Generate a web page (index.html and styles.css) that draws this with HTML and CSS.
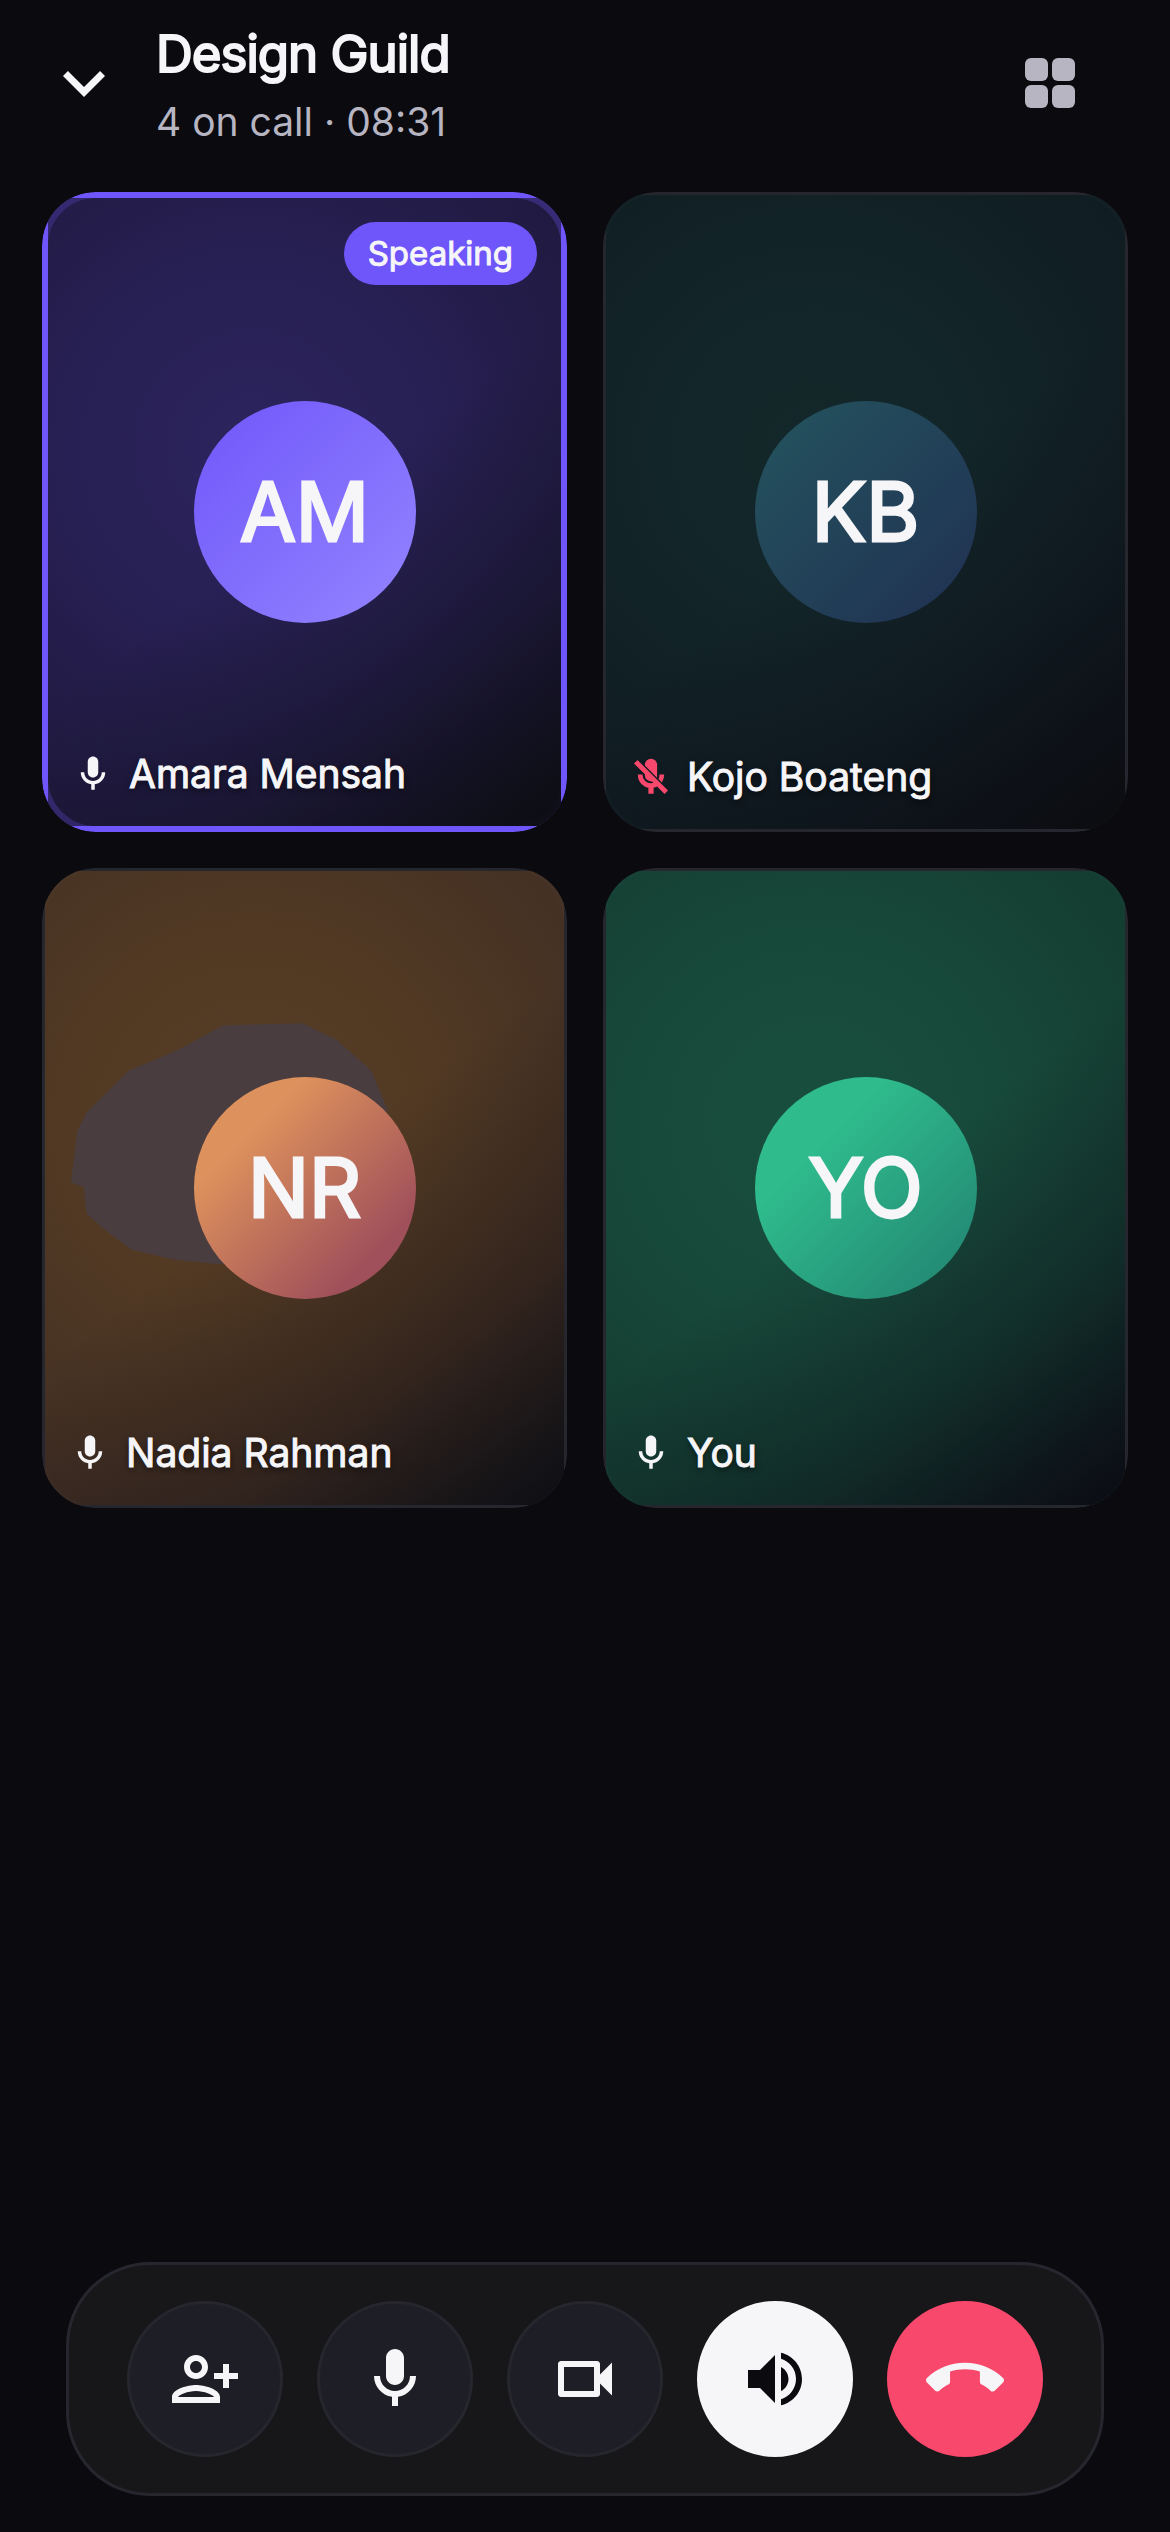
FILE: index.html
```html
<!DOCTYPE html>
<html lang="en">
<head>
    <meta charset="UTF-8">
    <meta name="viewport" content="width=device-width, initial-scale=1.0">
    <title>Design Guild</title>
    <link rel="stylesheet" href="styles.css">
</head>
<body>
    <header class="header">
        <button type="button" class="header-btn back" aria-label="Minimize call">
            <svg viewBox="0 0 24 24"><path d="M7.41 8.59 12 13.17l4.59-4.58L18 10l-6 6-6-6z"/></svg>
        </button>
        <div class="header-text">
            <h1>Design Guild</h1>
            <p>4 on call · 08:31</p>
        </div>
        <button type="button" class="header-btn layout" aria-label="Change layout">
            <svg viewBox="0 0 72 72">
                <rect x="11" y="11" width="23" height="23" rx="6"/>
                <rect x="38" y="11" width="23" height="23" rx="6"/>
                <rect x="11" y="38" width="23" height="23" rx="6"/>
                <rect x="38" y="38" width="23" height="23" rx="6"/>
            </svg>
        </button>
    </header>

    <main class="grid">
        <section class="tile tile-purple speaking">
            <div class="shade"></div>
            <div class="avatar">AM</div>
            <span class="badge">Speaking</span>
            <div class="name">
                <svg viewBox="0 0 24 24"><path d="M12 14c1.66 0 3-1.34 3-3V5c0-1.66-1.34-3-3-3S9 3.34 9 5v6c0 1.66 1.34 3 3 3zm5-3c0 2.76-2.24 5-5 5s-5-2.24-5-5H5c0 3.53 2.61 6.43 6 6.92V21h2v-3.08c3.39-.49 6-3.39 6-6.92h-2z"/></svg>
                <span>Amara Mensah</span>
            </div>
        </section>

        <section class="tile tile-teal">
            <div class="shade"></div>
            <div class="avatar">KB</div>
            <div class="name muted">
                <svg viewBox="0 0 24 24"><path d="M19 11h-1.7c0 .74-.16 1.43-.43 2.05l1.23 1.23c.56-.98.9-2.09.9-3.28zm-4.02.17c0-.06.02-.11.02-.17V5c0-1.66-1.34-3-3-3S9 3.34 9 5v.18l5.98 5.99zM4.27 3 3 4.27l6.01 6.01V11c0 1.66 1.33 3 2.99 3 .22 0 .44-.03.65-.08l1.66 1.66c-.71.33-1.5.52-2.31.52-2.76 0-5.3-2.1-5.3-5.1H5c0 3.41 2.72 6.23 6 6.72V21h2v-3.28c.91-.13 1.77-.45 2.54-.9L19.73 21 21 19.73 4.27 3z"/></svg>
                <span>Kojo Boateng</span>
            </div>
        </section>

        <section class="tile tile-amber">
            <div class="shade"></div>
            <div class="avatar">NR</div>
            <div class="name">
                <svg viewBox="0 0 24 24"><path d="M12 14c1.66 0 3-1.34 3-3V5c0-1.66-1.34-3-3-3S9 3.34 9 5v6c0 1.66 1.34 3 3 3zm5-3c0 2.76-2.24 5-5 5s-5-2.24-5-5H5c0 3.53 2.61 6.43 6 6.92V21h2v-3.08c3.39-.49 6-3.39 6-6.92h-2z"/></svg>
                <span>Nadia Rahman</span>
            </div>
        </section>

        <section class="tile tile-green">
            <div class="shade"></div>
            <div class="avatar">YO</div>
            <div class="name">
                <svg viewBox="0 0 24 24"><path d="M12 14c1.66 0 3-1.34 3-3V5c0-1.66-1.34-3-3-3S9 3.34 9 5v6c0 1.66 1.34 3 3 3zm5-3c0 2.76-2.24 5-5 5s-5-2.24-5-5H5c0 3.53 2.61 6.43 6 6.92V21h2v-3.08c3.39-.49 6-3.39 6-6.92h-2z"/></svg>
                <span>You</span>
            </div>
        </section>
    </main>

    <nav class="dock">
        <button type="button" class="dock-btn" aria-label="Add person">
            <svg viewBox="0 0 24 24"><path d="M13 8c0-2.21-1.79-4-4-4S5 5.79 5 8s1.79 4 4 4 4-1.79 4-4zm-2 0c0 1.1-.9 2-2 2s-2-.9-2-2 .9-2 2-2 2 .9 2 2zM1 18v2h16v-2c0-2.66-5.33-4-8-4s-8 1.34-8 4zm2 0c.2-.71 3.3-2 6-2 2.69 0 5.78 1.28 6 2H3zm17-3v-3h3v-2h-3V7h-2v3h-3v2h3v3h2z"/></svg>
        </button>
        <button type="button" class="dock-btn" aria-label="Mute">
            <svg viewBox="0 0 24 24"><path d="M12 14c1.66 0 3-1.34 3-3V5c0-1.66-1.34-3-3-3S9 3.34 9 5v6c0 1.66 1.34 3 3 3zm5-3c0 2.76-2.24 5-5 5s-5-2.24-5-5H5c0 3.53 2.61 6.43 6 6.92V21h2v-3.08c3.39-.49 6-3.39 6-6.92h-2z"/></svg>
        </button>
        <button type="button" class="dock-btn" aria-label="Camera">
            <svg viewBox="0 0 24 24"><path d="M15 8v8H5V8h10m1-2H4c-.55 0-1 .45-1 1v10c0 .55.45 1 1 1h12c.55 0 1-.45 1-1v-3.5l4 4v-11l-4 4V7c0-.55-.45-1-1-1z"/></svg>
        </button>
        <button type="button" class="dock-btn active" aria-label="Speaker">
            <svg viewBox="0 0 24 24"><path d="M3 9v6h4l5 5V4L7 9H3zm13.5 3c0-1.77-1.02-3.29-2.5-4.03v8.05c1.48-.73 2.5-2.25 2.5-4.02zM14 3.23v2.06c2.89.86 5 3.54 5 6.71s-2.11 5.85-5 6.71v2.06c4.01-.91 7-4.49 7-8.77s-2.99-7.86-7-8.77z"/></svg>
        </button>
        <button type="button" class="dock-btn end" aria-label="End call">
            <svg viewBox="0 0 24 24"><path d="M12 9c-1.6 0-3.15.25-4.6.72v3.1c0 .39-.23.74-.56.9-.98.49-1.87 1.12-2.66 1.85-.18.18-.43.28-.7.28-.28 0-.53-.11-.71-.29L.29 13.08c-.18-.17-.29-.42-.29-.7 0-.28.11-.53.29-.71C3.34 8.78 7.46 7 12 7s8.66 1.78 11.71 4.67c.18.18.29.43.29.71 0 .28-.11.53-.29.71l-2.48 2.48c-.18.18-.43.29-.71.29-.27 0-.52-.11-.7-.28-.79-.74-1.69-1.36-2.67-1.85-.33-.16-.56-.5-.56-.9v-3.1C15.15 9.25 13.6 9 12 9z"/></svg>
        </button>
    </nav>
</body>
</html>
```
FILE: styles.css
```css
* {
    box-sizing: border-box;
}
body {
    margin: 0;
    min-height: 100vh;
    display: flex;
    flex-direction: column;
    background-color: #0a0a0f;
    color: #f6f6f9;
    font-family: Inter, "Liberation Sans", sans-serif;
}
svg {
    display: block;
    fill: currentColor;
}
button {
    padding: 0;
    border: none;
    background: none;
    color: inherit;
    cursor: pointer;
}

/* Header */
.header {
    display: flex;
    align-items: center;
    padding: 21px 84px 48px 42px;
}
.header-btn svg {
    width: 84px;
    height: 84px;
}
.header-btn.layout {
    color: #b6b5c1;
}
.header-btn.layout svg {
    width: 72px;
    height: 72px;
}
.header-text {
    flex: 1;
    display: flex;
    flex-direction: column;
    gap: 12px;
    margin-left: 30px;
}
.header-text h1 {
    margin: 0;
    font-size: 51px;
    line-height: 66px;
    font-weight: 400;
    letter-spacing: -1px;
    -webkit-text-stroke: 2px currentColor;
}
.header-text p {
    margin: 0;
    font-size: 39px;
    line-height: 45px;
    color: #b6b5c1;
}

/* Participants */
.grid {
    display: grid;
    grid-template-columns: 1fr 1fr;
    gap: 36px;
    padding: 0 42px;
}
.tile {
    position: relative;
    aspect-ratio: 525 / 640;
    display: flex;
    align-items: center;
    justify-content: center;
    border: 3px solid #26262e;
    border-radius: 54px;
    clip-path: inset(0 round 54px);
    background-color: #0a0a0f;
}
.tile.speaking {
    border: 6px solid #6f56fa;
}
.shade {
    position: absolute;
    inset: 0;
}
.tile-purple .shade {
    background:
        linear-gradient(143deg, rgba(12, 13, 18, 0) 50%, rgba(12, 13, 18, 0.35) 76%, rgba(12, 13, 18, 0.95) 98%),
        radial-gradient(circle at 40% 40%, #2c245e 0%, rgba(42, 34, 90, 0.92) 35%, rgba(38, 30, 78, 0.75) 85%);
}
.tile-teal .shade {
    background:
        linear-gradient(143deg, rgba(12, 12, 20, 0) 50%, rgba(12, 12, 22, 0.4) 76%, rgba(12, 12, 16, 0.95) 98%),
        radial-gradient(circle at 40% 40%, #13282a 0%, rgba(19, 38, 42, 0.95) 35%, rgba(16, 29, 35, 0.9) 85%);
}
.tile-amber .shade {
    background:
        linear-gradient(143deg, rgba(12, 14, 20, 0) 48%, rgba(18, 14, 20, 0.4) 76%, rgba(12, 14, 20, 0.95) 98%),
        radial-gradient(circle at 40% 40%, #583e28 0%, rgba(86, 60, 36, 0.95) 35%, rgba(70, 50, 38, 0.92) 85%);
}
.tile-green .shade {
    background:
        linear-gradient(143deg, rgba(12, 12, 20, 0) 50%, rgba(12, 14, 24, 0.4) 76%, rgba(12, 12, 20, 0.95) 97%),
        radial-gradient(circle at 40% 40%, #184e3e 0%, rgba(24, 76, 60, 0.97) 35%, rgba(20, 62, 50, 0.93) 85%);
}
/* dusky patch behind the avatar */
.tile-amber .shade::after {
    content: "";
    position: absolute;
    left: 5%;
    top: 24%;
    width: 61%;
    height: 38%;
    background-color: #493d40;
    clip-path: polygon(0 66%, 2% 45%, 5% 37%, 18% 20%, 34% 11%, 48% 1%, 73% 0, 84% 7%, 95% 20%, 100% 36%, 60% 100%, 46% 100%, 32% 98%, 19% 94%, 10% 85%, 5% 79%, 4% 68%);
}
.avatar {
    position: relative;
    width: 222px;
    height: 222px;
    border-radius: 50%;
    display: flex;
    align-items: center;
    justify-content: center;
    font-size: 81px;
    -webkit-text-stroke: 3px currentColor;
}
.tile-purple .avatar {
    background: linear-gradient(135deg, #6f56fa, #9485ff);
}
.tile-teal .avatar {
    background: linear-gradient(135deg, #24545e, #203052);
}
.tile-amber .avatar {
    background: linear-gradient(135deg, #dd915c 25%, #a0505a 80%);
}
.tile-green .avatar {
    background: linear-gradient(135deg, #2fbb8c 30%, #218070);
}
.badge {
    position: absolute;
    top: 24px;
    right: 24px;
    padding: 0 24px;
    border-radius: 32px;
    background-color: #6f56fa;
    font-size: 33px;
    line-height: 63px;
    -webkit-text-stroke: 1px currentColor;
}
.name {
    position: absolute;
    left: 24px;
    bottom: 28px;
    display: flex;
    align-items: center;
    gap: 15px;
    font-size: 39px;
    line-height: 48px;
    -webkit-text-stroke: 1px currentColor;
    text-shadow: 0 3px 6px rgba(0, 0, 0, 0.6);
}
.name svg {
    width: 42px;
    height: 42px;
}
.name.muted svg {
    color: #f8486c;
    stroke: currentColor;
}

/* Call controls */
.dock {
    display: flex;
    justify-content: space-evenly;
    margin: auto 66px 36px;
    padding: 36px 24px;
    border: 3px solid #26262e;
    border-radius: 84px;
    background-color: #17171a;
}
.dock-btn {
    width: 156px;
    height: 156px;
    display: flex;
    align-items: center;
    justify-content: center;
    border: 3px solid #26262e;
    border-radius: 50%;
    background-color: #1e1e26;
}
.dock-btn svg {
    width: 72px;
    height: 72px;
}
.dock-btn.active {
    border-color: #f6f6f9;
    background-color: #f6f6f9;
    color: #0a0a0f;
}
.dock-btn.end {
    border-color: #f8486c;
    background-color: #f8486c;
}
.dock-btn.end svg {
    width: 78px;
    height: 78px;
}
```
